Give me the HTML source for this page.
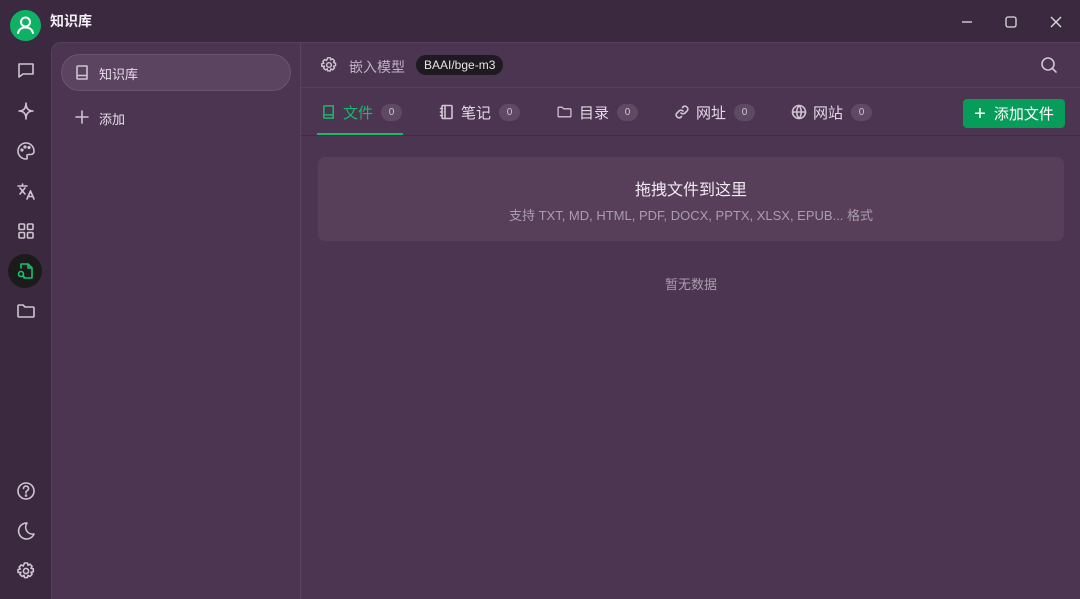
<!DOCTYPE html>
<html><head><meta charset="utf-8"><style>
*{margin:0;padding:0;box-sizing:border-box}
body{width:1080px;height:599px;overflow:hidden;background:#3b2a3f;font-family:"Liberation Sans","Noto Sans CJK SC",sans-serif;color:#e8dfe9;position:relative}
.abs{position:absolute}
svg{display:block}
.ic{stroke:#cfc4d1;fill:none;stroke-width:1.6;stroke-linecap:round;stroke-linejoin:round}
.panel{left:51px;top:42px;right:0;bottom:0;background:#4b3550;border-top-left-radius:10px;border-top:1px solid #56405a;border-left:1px solid #56405a}
.tab{position:absolute;top:100px;height:24px;display:flex;align-items:center;font-size:15px;color:#e3d9e4}
.badge{margin-left:8px;background:#5e4a62;color:#cfc4d1;font-size:10px;border-radius:9px;width:21px;height:17px;display:flex;align-items:center;justify-content:center}
</style></head><body>
<div class="abs" style="left:10px;top:10px;width:31px;height:31px;border-radius:50%;background:#0fb264">
<svg width="31" height="31" viewBox="0 0 31 31"><circle cx="15.5" cy="12" r="4.5" stroke="#fff" stroke-width="2" fill="none"/><path d="M8 23c1-4 4-5.5 7.5-5.5s6.5 1.5 7.5 5.5" stroke="#fff" stroke-width="2" fill="none" stroke-linecap="round"/></svg></div>
<div class="abs" style="left:50px;top:11px;font-size:14px;font-weight:bold;color:#f3eef4">知识库</div>
<svg class="abs" style="left:958px;top:14px" width="108" height="16"><path d="M4 8h10" stroke="#ddd" stroke-width="1.3"/><rect x="48" y="3" width="10" height="10" rx="2" stroke="#ddd" stroke-width="1.3" fill="none"/><path d="M93 3l10 10M103 3l-10 10" stroke="#ddd" stroke-width="1.3"/></svg>
<!-- left icons -->
<svg class="abs ic" style="left:16px;top:61px" width="20" height="20" viewBox="0 0 20 20"><path d="M3 3h14v10H7l-4 3z"/></svg>
<svg class="abs ic" style="left:16px;top:101px" width="20" height="20" viewBox="0 0 20 20"><path d="M10 2c0 5 2 8 7 8c-5 0-7 3-7 8c0-5-2-8-7-8c5 0 7-3 7-8z"/></svg>
<svg class="abs ic" style="left:16px;top:141px" width="20" height="20" viewBox="0 0 20 20"><path d="M10 2a8 8 0 0 0 0 16c1.5 0 1.5-1.5 1-2.5s0-2 1.5-2H15a3 3 0 0 0 3-3C18 5.5 14.5 2 10 2z"/><circle cx="6" cy="9" r=".8"/><circle cx="9" cy="6" r=".8"/><circle cx="13" cy="6.5" r=".8"/></svg>
<svg class="abs ic" style="left:16px;top:181px" width="20" height="20" viewBox="0 0 20 20"><path d="M2 5h9M6.5 3v2M4 7l5 6M9 7l-5 6M11 18l3.5-8 3.5 8M12 15.5h5"/></svg>
<svg class="abs ic" style="left:16px;top:221px" width="20" height="20" viewBox="0 0 20 20"><rect x="3" y="3" width="5.5" height="5.5" rx="1"/><rect x="11.5" y="3" width="5.5" height="5.5" rx="1"/><rect x="3" y="11.5" width="5.5" height="5.5" rx="1"/><rect x="11.5" y="11.5" width="5.5" height="5.5" rx="1"/></svg>
<div class="abs" style="left:8px;top:254px;width:34px;height:34px;border-radius:50%;background:#1b1b1b"></div>
<svg class="abs" style="left:15px;top:261px;stroke:#19c06e;fill:none;stroke-width:1.6;stroke-linecap:round;stroke-linejoin:round" width="20" height="20" viewBox="0 0 20 20"><path d="M6 7V3h7l4 4v10H9"/><path d="M13 3v4h4"/><circle cx="6" cy="13" r="2.5"/><path d="M8 15l1.5 1.5"/></svg>
<svg class="abs ic" style="left:16px;top:301px" width="20" height="20" viewBox="0 0 20 20"><path d="M2 5a1 1 0 0 1 1-1h4l2 2h8a1 1 0 0 1 1 1v8a1 1 0 0 1-1 1H3a1 1 0 0 1-1-1z"/></svg>
<svg class="abs ic" style="left:16px;top:481px" width="20" height="20" viewBox="0 0 20 20"><circle cx="10" cy="10" r="8"/><path d="M7.5 7.5a2.5 2.5 0 1 1 3.5 2.3c-.7.3-1 .8-1 1.5v.7"/><circle cx="10" cy="14.5" r=".5"/></svg>
<svg class="abs ic" style="left:16px;top:521px" width="20" height="20" viewBox="0 0 20 20"><path d="M11 2a8 8 0 1 0 7 11A7 7 0 0 1 11 2z"/></svg>
<svg class="abs ic" style="left:16px;top:561px" width="20" height="20" viewBox="0 0 20 20"><circle cx="10" cy="10" r="2.6"/><path d="M8.5 2h3l.5 2.3 2-1.1 2.1 2.1-1.1 2 2.3.5v3l-2.3.5 1.1 2-2.1 2.1-2-1.1-.5 2.3h-3l-.5-2.3-2 1.1-2.1-2.1 1.1-2L2 11.5v-3l2.3-.5-1.1-2 2.1-2.1 2 1.1z"/></svg>
<div class="abs panel"></div>
<div class="abs" style="left:300px;top:43px;width:1px;bottom:0;background:#5a445e"></div>
<div class="abs" style="left:61px;top:54px;width:230px;height:37px;border-radius:19px;background:#5a4460;border:1px solid #6a5470"></div>
<svg class="abs ic" style="left:74px;top:64px" width="17" height="17" viewBox="0 0 17 17"><path d="M3 14V3a1 1 0 0 1 1-1h9v13H4a1 1 0 0 1-1-1zM3 12.5a1 1 0 0 1 1-1h9"/></svg>
<div class="abs" style="left:99px;top:64px;font-size:13px">知识库</div>
<svg class="abs ic" style="left:75px;top:110px" width="14" height="14"><path d="M7 1v12M1 7h12"/></svg>
<div class="abs" style="left:99px;top:109px;font-size:13px">添加</div>
<!-- header -->
<svg class="abs ic" style="left:320px;top:56px" width="18" height="18" viewBox="0 0 20 20"><circle cx="10" cy="10" r="2.6"/><path d="M8.5 2h3l.5 2.3 2-1.1 2.1 2.1-1.1 2 2.3.5v3l-2.3.5 1.1 2-2.1 2.1-2-1.1-.5 2.3h-3l-.5-2.3-2 1.1-2.1-2.1 1.1-2L2 11.5v-3l2.3-.5-1.1-2 2.1-2.1 2 1.1z"/></svg>
<div class="abs" style="left:349px;top:57px;font-size:14px;color:#bfb3c2">嵌入模型</div>
<div class="abs" style="left:416px;top:55px;height:20px;padding:0 8px;border-radius:10px;background:#1e1a1f;font-size:12px;line-height:20px;color:#e8e4e8">BAAI/bge-m3</div>
<svg class="abs ic" style="left:1040px;top:56px" width="18" height="18"><circle cx="8" cy="8" r="6"/><path d="M12.5 12.5l3.5 3.5"/></svg>
<div class="abs" style="left:301px;top:87px;right:0;height:1px;background:#56405a"></div>
<!-- tabs -->
<div class="tab" style="left:321px;color:#19b86a"><svg width="16" height="16" viewBox="0 0 17 17" style="stroke:#19b86a;fill:none;stroke-width:1.6"><path d="M3 14V3a1 1 0 0 1 1-1h9v13H4a1 1 0 0 1-1-1zM3 12.5a1 1 0 0 1 1-1h9"/></svg><span style="margin-left:6px">文件</span><span class="badge">0</span></div>
<div class="abs" style="left:317px;top:133px;width:86px;height:2px;background:#19b86a"></div>
<div class="tab" style="left:439px"><svg class="ic" width="16" height="16" viewBox="0 0 16 16"><rect x="3" y="1.5" width="10" height="13" rx="1"/><path d="M6 1.5v13M1.5 4.5h2M1.5 8h2M1.5 11.5h2"/></svg><span style="margin-left:6px">笔记</span><span class="badge">0</span></div>
<div class="tab" style="left:556px"><svg class="ic" width="17" height="16" viewBox="0 0 20 20"><path d="M2 5a1 1 0 0 1 1-1h4l2 2h8a1 1 0 0 1 1 1v8a1 1 0 0 1-1 1H3a1 1 0 0 1-1-1z"/></svg><span style="margin-left:6px">目录</span><span class="badge">0</span></div>
<div class="tab" style="left:674px"><svg class="ic" width="16" height="16" viewBox="0 0 16 16"><path d="M7 9a3 3 0 0 0 4 0l2.5-2.5a3 3 0 0 0-4-4L8.5 3.5M9 7a3 3 0 0 0-4 0L2.5 9.5a3 3 0 0 0 4 4l1-1"/></svg><span style="margin-left:6px">网址</span><span class="badge">0</span></div>
<div class="tab" style="left:791px"><svg class="ic" width="16" height="16" viewBox="0 0 16 16"><circle cx="8" cy="8" r="6.5"/><path d="M1.5 8h13M8 1.5c-3 3.5-3 9.5 0 13M8 1.5c3 3.5 3 9.5 0 13"/></svg><span style="margin-left:6px">网站</span><span class="badge">0</span></div>
<div class="abs" style="left:963px;top:99px;width:102px;height:29px;border-radius:4px;background:#079c5a;color:#fff;font-size:15px;display:flex;align-items:center;justify-content:center"><span style="font-size:20px;margin-right:8px;line-height:1">+</span>添加文件</div>
<div class="abs" style="left:301px;top:135px;right:0;height:1px;background:#3e2c42"></div>
<!-- card -->
<div class="abs" style="left:318px;top:157px;width:746px;height:84px;border-radius:7px;background:#573f5a"></div>
<div class="abs" style="left:318px;top:176px;width:746px;text-align:center;font-size:16px;color:#f0e9f1">拖拽文件到这里</div>
<div class="abs" style="left:318px;top:205px;width:746px;text-align:center;font-size:13px;color:#aa9dad">支持 TXT, MD, HTML, PDF, DOCX, PPTX, XLSX, EPUB... 格式</div>
<div class="abs" style="left:318px;top:274px;width:746px;text-align:center;font-size:13px;color:#aa9dad">暂无数据</div>
</body></html>
